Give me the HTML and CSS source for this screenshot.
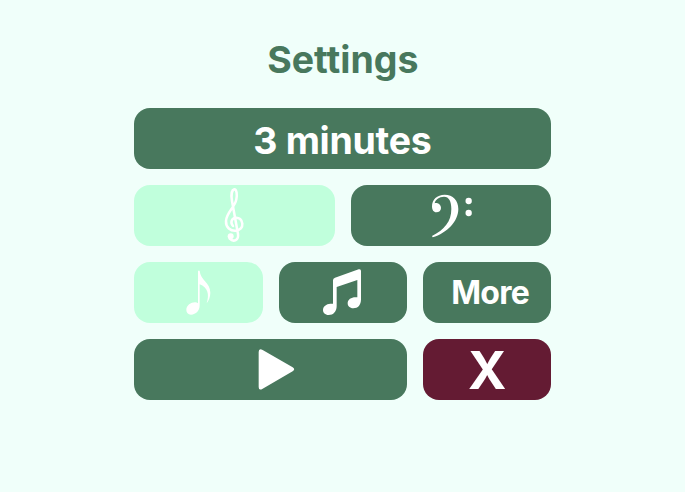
FILE: index.html
```html
<!DOCTYPE html>
<html lang="en">
<head>
<meta charset="utf-8">
<title>Settings</title>
<link rel="stylesheet" href="styles.css">
</head>
<body>
<main class="settings">
  <h1 class="title">Settings</h1>
  <div class="grid">
    <button class="btn time"><span>3 minutes</span></button>
    <button class="btn half selected" aria-label="Treble clef">
      <svg width="49" height="61" viewBox="0 15 147 183" fill="none" stroke="currentColor" stroke-linecap="round" stroke-linejoin="round">
        <path stroke-width="7.5" d="M59 176 C71 188 87 180 84 162 L66 63 C63 46 65 30 73 28 C80 28 82 44 79 58 C75 82 49 97 48 123 C47 143 62 153 77 152 C91 151 98 142 97 131 C96 119 87 112 77 113 C65 114 60 128 69 138"/>
        <circle cx="62" cy="169" r="9" fill="currentColor" stroke="none"/>
      </svg>
    </button>
    <button class="btn half" aria-label="Bass clef">
      <svg width="62" height="61" viewBox="0 0 186 183" fill="currentColor">
        <path d="M36 153 C73 134 94 110 94 72 C94 49 87 35 72 35 C57 35 46 44 44 55 C54 52 63 60 63 69 C63 77 57 82 49 82 C41 82 36 75 36 64 C36 44 51 29 74 29 C99 29 115 46 115 72 C115 109 81 144 38 157 Z"/>
        <circle cx="146" cy="48" r="9.5"/><circle cx="146" cy="84" r="9.5"/>
      </svg>
    </button>
    <button class="btn third selected" aria-label="Eighth note">
      <svg width="47" height="61" viewBox="0 0 141 183" fill="currentColor">
        <path d="M69 26 L74 26 C76 55 106 61 106 92 C106 104 101 117 95 124 C104 97 98 76 74 67 L74 130 C74 146 63 158 48 158 C39 158 34 152 34 144 C34 130 48 121 60 121 C64 121 67 122 69 124 Z"/>
      </svg>
    </button>
    <button class="btn third" aria-label="Beamed notes">
      <svg width="56" height="61" viewBox="0 0 168 183" fill="currentColor">
        <path d="M54 55 Q54 49 60 47 L131 22 Q138 20 138 27 L138 112 C138 129 129 139 115 139 C104 139 98 132 98 124 C98 113 109 106 121 106 L127 106 L127 54 L65 75 L65 132 C65 149 55 159 41 159 C30 159 24 152 24 144 C24 133 34 126 46 125 L54 125 Z"/>
      </svg>
    </button>
    <button class="btn third more"><span>More</span></button>
    <button class="btn play" aria-label="Play">
      <svg width="51" height="61" viewBox="0 12 153 183" fill="currentColor">
        <path d="M41 51 Q41 39 53 45 L143 97 Q152 103 143 109 L53 161 Q41 168 41 156 Z"/>
      </svg>
    </button>
    <button class="btn third close"><span>X</span></button>
  </div>
</main>
</body>
</html>
```
FILE: styles.css
```css
* { box-sizing: border-box; }
body {
  margin: 0;
  min-height: 100vh;
  background: #f0fffa;
  font-family: Inter, "Liberation Sans", sans-serif;
}
.settings {
  width: 417px;
  margin-left: 134.3px;
  padding-top: 36px;
}
.title {
  margin: 0 0 24px;
  height: 48px;
  line-height: 48px;
  text-align: center;
  font-size: 37.5px;
  font-weight: 700;
  letter-spacing: 0;
  color: #48785d;
}
.grid {
  display: grid;
  grid-template-columns: repeat(6, 1fr);
  grid-auto-rows: 61px;
  column-gap: 16px;
  row-gap: 16px;
}
.btn {
  display: flex;
  align-items: center;
  justify-content: center;
  min-width: 0;
  padding: 0;
  border: 0;
  border-radius: 16px;
  background: #48785d;
  color: #fff;
  font-family: inherit;
  font-weight: 700;
}
.btn svg { display: block; flex: none; }
.selected { background: #c0ffdc; }
.time { grid-column: span 6; font-size: 37.5px; letter-spacing: -0.3px; padding: 4px 1px 0 0; }
.half { grid-column: span 3; }
.third { grid-column: span 2; }
.play { grid-column: span 4; }
.more { font-size: 32px; letter-spacing: -0.8px; padding-left: 6px; }
.close { background: #641b33; font-size: 52px; padding-top: 1px; }
```
